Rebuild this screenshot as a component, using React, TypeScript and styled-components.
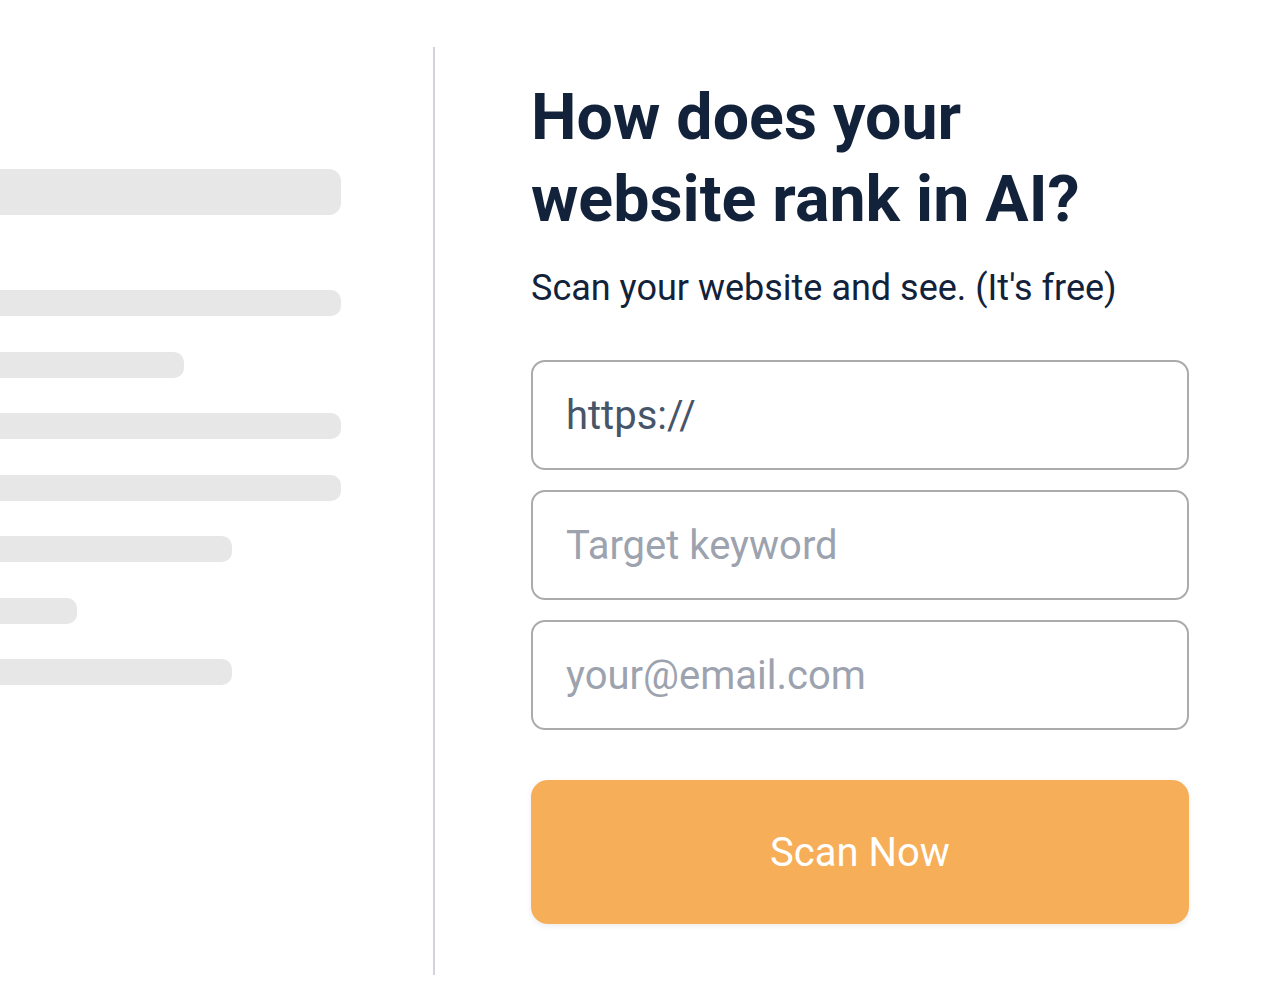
import React from "react";
import styled, { createGlobalStyle } from "styled-components";

const Global = createGlobalStyle`
  html, body { margin: 0; padding: 0; background: #ffffff; }
  body { font-family: Roboto, "Liberation Sans", sans-serif; overflow: hidden; }
  * { box-sizing: border-box; }
`;

const Page = styled.div`
  display: flex;
  width: 1288px;
  height: 1004px;
  padding-top: 47px;
`;

const LeftPanel = styled.div`
  width: 435px;
  height: 928px;
  border-right: 2px solid #d1d5db;
  overflow: hidden;
  padding-top: 122px;
  display: flex;
  flex-direction: column;
  align-items: flex-start;
`;

const Bar = styled.div<{ $w: number; $h?: number; $mb?: number }>`
  width: ${(p) => p.$w + 24}px;
  height: ${(p) => p.$h ?? 26}px;
  margin-left: -24px;
  margin-bottom: ${(p) => p.$mb ?? 35.5}px;
  background: #e7e7e7;
  border-radius: ${(p) => ((p.$h ?? 26) > 30 ? 12 : 10)}px;
  flex-shrink: 0;
`;

const RightPanel = styled.div`
  flex: 1;
  padding-left: 96px;
  padding-top: 29px;
`;

const Content = styled.div`
  width: 658px;
  display: flex;
  flex-direction: column;
`;

const Heading = styled.h1`
  margin: 0;
  font-family: Roboto, "Liberation Sans", sans-serif;
  font-weight: 700;
  font-size: 64.5px;
  line-height: 82px;
  color: #12223a;
`;

const Sub = styled.p`
  margin: 26px 0 0;
  font-size: 36px;
  line-height: 44px;
  color: #12223a;
  font-weight: 400;
`;

const Fields = styled.div`
  display: flex;
  flex-direction: column;
  gap: 20px;
  margin-top: 50px;
`;

const Field = styled.input`
  display: block;
  width: 658px;
  height: 110px;
  border: 2px solid #ababab;
  border-radius: 14px;
  padding: 0 33px;
  font-family: Roboto, "Liberation Sans", sans-serif;
  font-size: 40px;
  color: #475569;
  background: #ffffff;
  outline: none;
  &::placeholder {
    color: #9ca3af;
  }
`;

const Button = styled.button`
  margin-top: 50px;
  width: 658px;
  height: 144px;
  border: none;
  border-radius: 17px;
  background: #f7ae58;
  color: #ffffff;
  font-family: Roboto, "Liberation Sans", sans-serif;
  font-size: 40px;
  font-weight: 400;
  box-shadow: 0 2px 6px rgba(0, 0, 0, 0.08);
  cursor: pointer;
`;

const bars = [
  { w: 341, h: 46, mb: 75 },
  { w: 341 },
  { w: 184 },
  { w: 341 },
  { w: 341 },
  { w: 232 },
  { w: 77 },
  { w: 232 },
];

export default function App() {
  return (
    <>
      <Global />
      <Page>
        <LeftPanel>
          {bars.map((b, i) => (
            <Bar key={i} $w={b.w} $h={b.h} $mb={b.mb} />
          ))}
        </LeftPanel>
        <RightPanel>
          <Content>
            <Heading>
              How does your
              <br />
              website rank in AI?
            </Heading>
            <Sub>Scan your website and see. (It's free)</Sub>
            <Fields>
              <Field type="text" defaultValue="https://" />
              <Field type="text" placeholder="Target keyword" />
              <Field type="email" placeholder="your@email.com" />
            </Fields>
            <Button>Scan Now</Button>
          </Content>
        </RightPanel>
      </Page>
    </>
  );
}
